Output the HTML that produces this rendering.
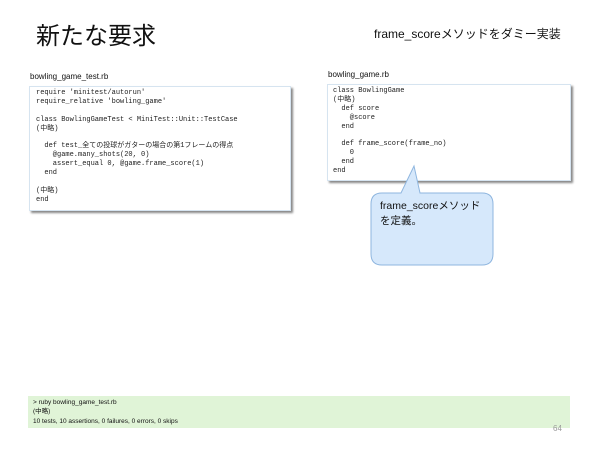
<!DOCTYPE html>
<html><head><meta charset="utf-8"><style>
body{margin:0;width:600px;height:450px;background:#fff;position:relative;font-family:"Liberation Sans","Noto Sans CJK JP",sans-serif;overflow:hidden}
.a{position:absolute}
pre{margin:0;font-family:"Liberation Mono","Noto Sans CJK JP",monospace;font-size:7px;line-height:8.9px;color:#222}
.box{background:#fff;border:1px solid #d6e4f0;box-shadow:2px 2px 2px #888}
</style></head><body>
<div class="a" style="left:36px;top:16px;font-size:24px;color:#111">新たな要求</div>
<div class="a" style="left:374px;top:25px;font-size:12px;color:#111">frame_scoreメソッドをダミー実装</div>
<div class="a" style="left:30px;top:72px;font-size:8px;color:#111">bowling_game_test.rb</div>
<div class="a" style="left:328px;top:70px;font-size:8px;color:#111">bowling_game.rb</div>
<div class="a box" style="left:29px;top:86px;width:260px;height:123px"><pre style="padding:2px 0 0 6px">require 'minitest/autorun'
require_relative 'bowling_game'

class BowlingGameTest &lt; MiniTest::Unit::TestCase
(中略)

  def test_全ての投球がガターの場合の第1フレームの得点
    @game.many_shots(20, 0)
    assert_equal 0, @game.frame_score(1)
  end

(中略)
end</pre></div>
<div class="a box" style="left:327px;top:84px;width:242px;height:95px"><pre style="padding:2px 0 0 5px">class BowlingGame
(中略)
  def score
    @score
  end

  def frame_score(frame_no)
    0
  end
end</pre></div>
<svg class="a" style="left:0;top:0" width="600" height="450"><path d="M384,193 L401,193 L414,166 L420,193 L482,193 Q493,193 493,204 L493,254 Q493,265 482,265 L382,265 Q371,265 371,254 L371,204 Q371,193 382,193 Z" fill="#d6e8fb" stroke="#8fb6df" stroke-width="1"/></svg>
<div class="a" style="left:380px;top:199px;font-size:10.5px;line-height:15px;color:#111">frame_scoreメソッド<br>を定義。</div>
<div class="a" style="left:28px;top:396px;width:542px;height:32px;background:#e0f4d7"></div>
<div class="a" style="left:33px;top:398px;font-size:6.5px;line-height:9.3px;color:#111">&gt; ruby bowling_game_test.rb<br>(中略)<br>10 tests, 10 assertions, 0 failures, 0 errors, 0 skips</div>
<div class="a" style="left:553px;top:424px;font-size:8px;color:#999">64</div>
</body></html>
